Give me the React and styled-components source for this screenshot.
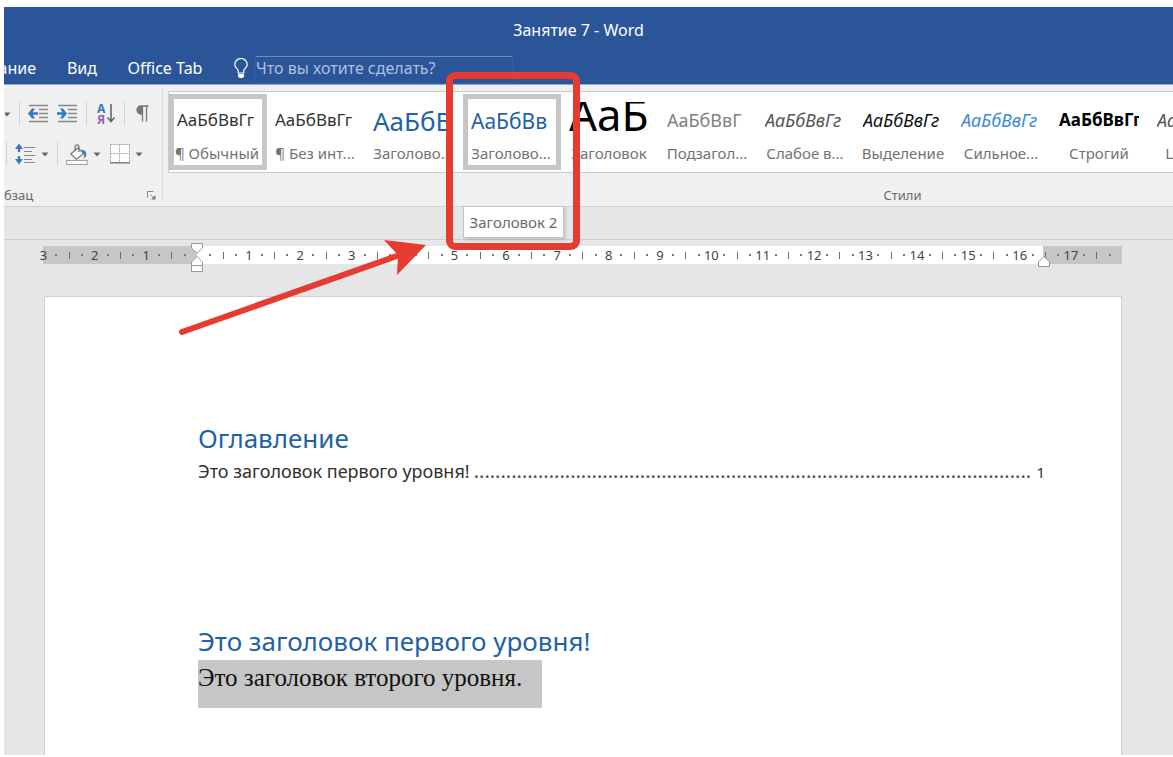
import React from 'react';
import styled, { createGlobalStyle, css } from 'styled-components';

const GlobalStyle = createGlobalStyle`
  * {
    box-sizing: border-box;
  }
  body {
    margin: 0;
    background: #fff;
    font-family: 'Noto Sans', 'Open Sans', sans-serif;
  }
  button {
    border: 0;
    padding: 0;
    background: none;
    font: inherit;
    color: inherit;
  }
`;

const Window = styled.div`
  display: flex;
  flex-direction: column;
  height: 100vh;
  border: solid #fff;
  border-width: 7px 0 2px 4px;
  background: #e6e6e6;
  overflow: hidden;
`;

const Header = styled.header`
  flex: none;
  background: #2a5699;
  border-bottom: 1px solid #8ea9d3;
  color: #fff;
  font-size: 16px;
`;

const Title = styled.h1`
  margin: 0;
  padding: 12px 20px 0 0;
  font-size: 16px;
  font-weight: 400;
  line-height: 22px;
  text-align: center;
`;

const Tabs = styled.nav`
  display: flex;
  align-items: flex-end;
  height: 43px;
  overflow: hidden;
`;

const Tab = styled.button`
  width: ${(p) => p.$width}px;
  height: 30px;
  padding-bottom: 2px;
  flex: none;
  display: flex;
  justify-content: ${(p) => (p.$cut ? 'flex-end' : 'center')};
  align-items: center;
  white-space: nowrap;
`;

const TellMe = styled.label`
  display: flex;
  align-items: center;
  gap: 7px;
  margin-left: 32px;
`;

const TellMeInput = styled.input`
  width: 258px;
  height: 28px;
  padding: 0 0 5px;
  border: 1px solid #315c9f;
  border-top-color: #6c8cc0;
  background: none;
  color: #fff;
  font: inherit;
  &::placeholder {
    color: #adc0de;
    opacity: 1;
  }
`;

const Ribbon = styled.div`
  flex: none;
  display: flex;
  height: 122px;
  background: #f0f0f0;
  border-bottom: 1px solid #d2d2d2;
`;

const Group = styled.section`
  display: flex;
  flex-direction: column;
  ${(p) =>
    p.$grow
      ? css`
          flex: 1;
          min-width: 0;
          padding: 6px 0 0 5px;
        `
      : css`
          flex: none;
          width: 159px;
          margin: 3px 0 5px;
          padding-top: 14px;
          border-right: 1px solid #d9d9d9;
        `}
`;

const ToolRow = styled.div`
  display: flex;
  align-items: center;
  gap: 8px;
  height: 24px;
  margin-bottom: 16px;
  padding-left: ${(p) => (p.$indent ? 2 : 0)}px;
`;

const Divider = styled.span`
  width: 1px;
  height: 24px;
  background: #d4d4d4;
`;

const Tool = styled.button`
  display: flex;
  justify-content: center;
  align-items: center;
  width: ${(p) => p.$width || 21}px;
  height: 24px;
`;

const Split = styled.span`
  display: flex;
  gap: 5px;
`;

const GroupLabel = styled.div`
  display: flex;
  align-items: center;
  justify-content: ${(p) => (p.$center ? 'center' : 'space-between')};
  height: 20px;
  padding-right: ${(p) => (p.$center ? 0 : 6)}px;
  margin-top: ${(p) => (p.$center ? 12 : 3)}px;
  padding-left: ${(p) => (p.$center ? 464 : 0)}px;
  color: #6a6a6a;
  font-size: 13px;
`;

const Gallery = styled.div`
  display: flex;
  height: 82px;
  border: 1px solid #c5cbcf;
  border-right: 0;
  padding-top: 2px;
  background: #fff;
`;

const CardSlot = styled.div`
  position: relative;
  flex: none;
  width: 98px;
`;

const Card = styled.button`
  display: flex;
  flex-direction: column;
  align-items: center;
  width: 98px;
  height: 76px;
  padding: ${(p) => (p.$selected ? 3 : 8)}px 2px 0 0;
  border: ${(p) => (p.$selected ? '5px solid #c6c6c6' : '0')};
`;

const Preview = styled.span`
  flex: none;
  width: 80px;
  height: 36px;
  overflow: hidden;
  white-space: nowrap;
  text-align: left;
  line-height: ${(p) => p.$line || 36}px;
  font-size: ${(p) => p.$size || 17}px;
  font-style: ${(p) => (p.$italic ? 'italic' : 'normal')};
  font-weight: ${(p) => p.$weight || 400};
  color: ${(p) => p.$color || '#333'};
`;

const StyleName = styled.span`
  margin-top: 4px;
  line-height: 22px;
  font-size: 15px;
  white-space: nowrap;
  color: #737373;
`;

const Tooltip = styled.div`
  position: absolute;
  z-index: 1;
  left: 0;
  top: 112px;
  width: 101px;
  height: 32px;
  border: 1px solid #c3c3c3;
  background: #fff;
  box-shadow: 2px 2px 3px rgba(0, 0, 0, 0.15);
  color: #6b6b6b;
  font-size: 15px;
  line-height: 30px;
  text-align: center;
  white-space: nowrap;
`;

const Frame = styled.div`
  position: absolute;
  z-index: 2;
  left: -17px;
  top: -22px;
  width: 134px;
  height: 178px;
  border: 7px solid #e63b30;
  border-radius: 9px;
  pointer-events: none;
`;

const Arrow = styled.svg`
  position: absolute;
  z-index: 2;
  left: -288px;
  top: 142px;
  pointer-events: none;
`;

const Strip = styled.div`
  flex: none;
  height: 33px;
  border-bottom: 1px solid #cdcdcd;
`;

const Ruler = styled.div`
  position: relative;
  flex: none;
  height: 18px;
  margin: 6px 51px 0 39px;
  background: linear-gradient(
    to right,
    #c6c6c6 14.3%,
    #fff 14.3%,
    #fff 92.7%,
    #c6c6c6 92.7%
  );
`;

const Marks = styled.div`
  display: grid;
  grid-template-columns: repeat(84, minmax(0, 1fr));
  height: 18px;
  margin: 0 6px 0 -6px;
`;

const Mark = styled.span`
  display: flex;
  justify-content: center;
  align-items: center;
  color: #444;
  font-size: 13px;
  line-height: 18px;
`;

const Dot = styled.i`
  width: 2px;
  height: 2px;
  background: #7b7b7b;
`;

const Tick = styled.i`
  width: 1px;
  height: 7px;
  background: #6d6d6d;
`;

const Marker = styled.svg`
  position: absolute;
  left: ${(p) => p.$at};
  top: ${(p) => p.$top}px;
  margin-left: -7px;
`;

const Page = styled.main`
  flex: 1;
  margin: 32px 51px 0 40px;
  padding: 122px 76px 0 153px;
  border: 1px solid #d0d0d0;
  border-bottom: 0;
  background: #fff;
`;

const Heading = styled.h2`
  margin: 0;
  font-size: 26px;
  font-weight: 400;
  line-height: 38px;
  color: #1f62a5;
`;

const TocLine = styled.a`
  display: flex;
  align-items: baseline;
  gap: 4px;
  height: 28px;
  margin-bottom: 137px;
  color: #303030;
  font-size: 18px;
  line-height: 28px;
  white-space: nowrap;
  text-decoration: none;
`;

const Leader = styled.span`
  flex: 1;
  min-width: 0;
  overflow: hidden;
  color: #555;
  font-size: 20px;
`;

const PageNumber = styled.span`
  font-size: 15px;
`;

const Selection = styled.p`
  width: fit-content;
  height: 48px;
  margin: 0;
  padding-right: 20px;
  background: #c6c6c6;
  color: #111;
  font-family: 'Liberation Serif', serif;
  font-size: 25px;
  line-height: 35px;
`;

const Chevron = ({ cut }) => (
  <svg width={cut ? 6 : 8} height="5" viewBox={cut ? '2 0 6 5' : '0 0 8 5'}>
    <path d="M0.5 0.5h7L4 4.5z" fill="#666" />
  </svg>
);

const IndentIcon = ({ right }) => (
  <svg width="21" height="20" viewBox="0 0 21 20" fill="none">
    <path d="M1 1.5h19M11 5.5h9M11 9.5h9M11 13.5h9M1 17.5h19" stroke="#888" strokeWidth="1.3" />
    <path d={right ? 'M0 9.5h6' : 'M4 9.5h6'} stroke="#3d7ab8" strokeWidth="2.6" />
    <path
      d={right ? 'M3 4.5h3l4 5-4 5H3l3-5z' : 'M7 4.5H4l-4 5 4 5h3l-3-5z'}
      fill="#3d7ab8"
    />
  </svg>
);

const SortIcon = () => (
  <svg width="20" height="24" viewBox="0 0 20 24" fontFamily="'Noto Sans', sans-serif" fontWeight="700" fontSize="12">
    <text x="1" y="11" fill="#3d7ab8">А</text>
    <text x="1" y="22" fill="#9a5bb5">Я</text>
    <path d="M15 2v17M11.5 15.5l3.5 4 3.5-4" fill="none" stroke="#666" strokeWidth="1.6" />
  </svg>
);

const PilcrowIcon = () => (
  <svg width="13" height="18" viewBox="0 0 13 18">
    <path d="M12.5 1H5a4 4 0 0 0 0 8h1.2V1M6.5 1v15.5M10.5 1v15.5" fill="none" stroke="#777" strokeWidth="1.3" />
    <path d="M6 1H5a4 4 0 0 0 0 8h1z" fill="#777" />
  </svg>
);

const SpacingIcon = () => (
  <svg width="21" height="22" viewBox="0 0 21 22" fill="none">
    <path d="M9 4.5h11M9 8.5h8M9 12.5h11M9 16.5h8M9 19.5h11" stroke="#888" strokeWidth="1.2" />
    <path d="M4 3v6M4 13v6" stroke="#3f73c4" strokeWidth="2.2" />
    <path d="M4 .5l4 5.5H0zM4 21.5L0 16h8z" fill="#3f73c4" />
  </svg>
);

const BucketIcon = () => (
  <svg width="23" height="23" viewBox="0 0 23 23" fill="none">
    <path d="M5 11l7.5-6.5 6 6L11 16.5z" fill="#fff" stroke="#777" strokeWidth="1.3" />
    <path d="M9.500 8V3.500a2 2 0 0 1 4 0V9" stroke="#777" strokeWidth="1.3" />
    <path d="M16 6.500c4 0 6 2.500 5 6.500l-2.500 3c.5-3 .5-5-.5-6z" fill="#3d7ab8" />
    <rect x="0.7" y="17.7" width="21.5" height="4.3" fill="#fff" stroke="#9a9a9a" />
  </svg>
);

const BordersIcon = () => (
  <svg width="20" height="20" viewBox="0 0 20 20" fill="none">
    <path d="M1 1h18v18H1z" fill="#fff" />
    <path d="M.5.5h19M.5 9.5h19M.5.5v18M9.5.5v18M19.5.5v18" stroke="#aaa" strokeDasharray="2 1" />
    <path d="M0 18.8h20" stroke="#777" strokeWidth="1.4" />
  </svg>
);

const LauncherIcon = () => (
  <svg width="9" height="9" viewBox="0 0 9 9" fill="none" stroke="#888">
    <path d="M.5 6.5v-6h6M3.5 3.5l4 4" />
    <path d="M8.5 4v4.5H4z" fill="#777" stroke="none" />
  </svg>
);

const BulbIcon = () => (
  <svg width="14" height="24" viewBox="0 0 14 24" fill="none" stroke="#fff" strokeWidth="1.2">
    <path d="M4.2 15v-2.500C3.500 10.500.8 9.500.8 6.500a6.200 6 0 0 1 12.400 0c0 3-2.700 4-3.400 6V15z" />
    <path d="M4 16h6v2.500L8.500 20h-3L4 18.500z" fill="#fff" stroke="none" />
  </svg>
);

const styles = [
  { name: '¶ Обычный', text: 'АаБбВвГг', selected: true },
  { name: '¶ Без инт...', text: 'АаБбВвГг' },
  { name: 'Заголово...', text: 'АаБбВ', size: 26, line: 38, color: '#1f62a5' },
  { name: 'Заголово...', text: 'АаБбВв', size: 21, line: 38, color: '#1f62a5', selected: true, hint: 'Заголовок 2' },
  { name: 'Заголовок', text: 'АаБ', size: 44, line: 24, color: '#000' },
  { name: 'Подзагол...', text: 'АаБбВвГ', size: 18, color: '#808080' },
  { name: 'Слабое в...', text: 'АаБбВвГг', size: 18, italic: true, color: '#555' },
  { name: 'Выделение', text: 'АаБбВвГг', size: 18, italic: true, color: '#111' },
  { name: 'Сильное...', text: 'АаБбВвГг', size: 18, italic: true, color: '#3c8ad6' },
  { name: 'Строгий', text: 'АаБбВвГг', weight: 700, color: '#000' },
  { name: 'Цитата 2', text: 'АаБбВвГг', size: 18, italic: true, color: '#555' },
];

// four marks per centimetre, starting 3 cm left of the margin
const marks = Array.from({ length: 84 }, (_, i) => i - 12);

function renderMark(n) {
  if (n === 0) return null;
  if (n % 4 === 0) return Math.abs(n / 4);
  return n % 2 === 0 ? <Tick /> : <Dot />;
}

function StyleCard({ item }) {
  return (
    <CardSlot>
      <Card $selected={item.selected}>
        <Preview
          $size={item.size}
          $line={item.line}
          $color={item.color}
          $italic={item.italic}
          $weight={item.weight}
        >
          {item.text}
        </Preview>
        <StyleName>{item.name}</StyleName>
      </Card>
      {item.hint && (
        <>
          <Tooltip role="tooltip">{item.hint}</Tooltip>
          <Frame />
          <Arrow width="260" height="104" viewBox="0 0 260 104">
            <path d="M7 96L222 20" stroke="#e63b30" strokeWidth="6" strokeLinecap="round" />
            <path d="M251 9L209 4l14 15-1 20z" fill="#e63b30" />
          </Arrow>
        </>
      )}
    </CardSlot>
  );
}

function App() {
  return (
    <Window>
      <GlobalStyle />
      <Header>
        <Title>Занятие 7 - Word</Title>
        <Tabs>
          <Tab $width={32} $cut>ание</Tab>
          <Tab $width={92}>Вид</Tab>
          <Tab $width={74}>Office Tab</Tab>
          <TellMe>
            <BulbIcon />
            <TellMeInput placeholder="Что вы хотите сделать?" aria-label="Что вы хотите сделать?" />
          </TellMe>
        </Tabs>
      </Header>

      <Ribbon>
        <Group>
          <ToolRow>
            <Tool $width={7} aria-label="Список"><Chevron cut /></Tool>
            <Divider />
            <Tool aria-label="Уменьшить отступ"><IndentIcon /></Tool>
            <Tool aria-label="Увеличить отступ"><IndentIcon right /></Tool>
            <Divider />
            <Tool aria-label="Сортировка"><SortIcon /></Tool>
            <Divider />
            <Tool $width={18} aria-label="Отобразить все знаки"><PilcrowIcon /></Tool>
          </ToolRow>
          <ToolRow $indent>
            <Divider />
            <Split>
              <Tool aria-label="Интервал"><SpacingIcon /></Tool>
              <Tool $width={8} aria-label="Варианты интервала"><Chevron /></Tool>
            </Split>
            <Divider />
            <Split>
              <Tool $width={22} aria-label="Заливка"><BucketIcon /></Tool>
              <Tool $width={8} aria-label="Цвет заливки"><Chevron /></Tool>
            </Split>
            <Split>
              <Tool aria-label="Границы"><BordersIcon /></Tool>
              <Tool $width={8} aria-label="Виды границ"><Chevron /></Tool>
            </Split>
          </ToolRow>
          <GroupLabel>
            бзац
            <Tool $width={9} aria-label="Параметры абзаца"><LauncherIcon /></Tool>
          </GroupLabel>
        </Group>
        <Group $grow>
          <Gallery>
            {styles.map((item, i) => (
              <StyleCard key={i} item={item} />
            ))}
          </Gallery>
          <GroupLabel $center>Стили</GroupLabel>
        </Group>
      </Ribbon>

      <Strip />
      <Ruler>
        <Marks>
          {marks.map((n) => (
            <Mark key={n}>{renderMark(n)}</Mark>
          ))}
        </Marks>
        <Marker $at="14.3%" $top={-4} width="14" height="31" viewBox="0 0 14 31" fill="#fff" stroke="#999">
          <path d="M1.5 1.5h11v4.5L7 11 1.5 6z" />
          <path d="M1.5 29.5V20L7 14.5l5.5 5.5v9.500zM1.5 23.5h11" />
        </Marker>
        <Marker $at="92.8%" $top={9} width="14" height="13" viewBox="0 0 14 13" fill="#fff" stroke="#999">
          <path d="M1.5 11.5V7L7 1.5 12.5 7v4.5z" />
        </Marker>
      </Ruler>

      <Page>
        <Heading>Оглавление</Heading>
        <TocLine href="#heading">
          <span>Это заголовок первого уровня!</span>
          <Leader aria-hidden="true">{'.'.repeat(104)}</Leader>
          <PageNumber>1</PageNumber>
        </TocLine>
        <Heading id="heading">Это заголовок первого уровня!</Heading>
        <Selection>Это заголовок второго уровня.</Selection>
      </Page>
    </Window>
  );
}

export default App;
